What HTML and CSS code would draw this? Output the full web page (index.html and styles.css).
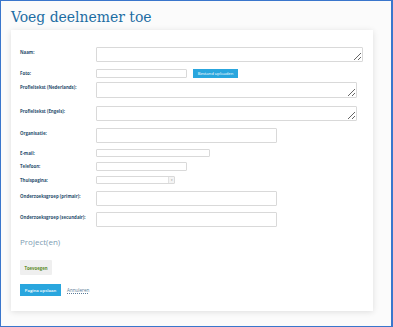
FILE: index.html
```html
<!DOCTYPE html>
<html lang="nl">
<head>
    <meta charset="UTF-8">
    <meta name="viewport" content="width=device-width, initial-scale=1.0">
    <title>Voeg deelnemer toe</title>
    <link rel="stylesheet" href="styles.css">
</head>
<body>

<div class="frame">
    <h1>Voeg deelnemer toe</h1>

    <div class="card">
        <form id="deelnemerForm">
            <div class="row r-naam">
                <label for="naam">Naam:</label>
                <textarea id="naam" class="area wide"></textarea>
            </div>
            <div class="row r-foto">
                <label for="foto">Foto:</label>
                <input type="text" id="foto" class="field small">
                <button type="button" class="btn-upload">Bestand uploaden</button>
            </div>
            <div class="row r-ned">
                <label for="ned">Profieltekst (Nederlands):</label>
                <textarea id="ned" class="area mid tall"></textarea>
            </div>
            <div class="row r-eng">
                <label for="eng">Profieltekst (Engels):</label>
                <textarea id="eng" class="area mid"></textarea>
            </div>
            <div class="row r-org">
                <label for="org">Organisatie:</label>
                <input type="text" id="org" class="field big">
            </div>
            <div class="row r-mail">
                <label for="mail">E-mail:</label>
                <input type="text" id="mail" class="field email">
            </div>
            <div class="row r-tel">
                <label for="tel">Telefoon:</label>
                <input type="text" id="tel" class="field small">
            </div>
            <div class="row r-thuis">
                <label>Thuispagina:</label>
                <div class="select">
                    <span class="select-arrow">&#9662;</span>
                </div>
            </div>
            <div class="row r-prim">
                <label for="prim">Onderzoeksgroep (primair):</label>
                <input type="text" id="prim" class="field big">
            </div>
            <div class="row r-sec">
                <label for="sec">Onderzoeksgroep (secundair):</label>
                <input type="text" id="sec" class="field big">
            </div>

            <h2>Project(en)</h2>
            <button type="button" class="btn-add">Toevoegen</button>

            <div class="actions">
                <button type="submit" class="btn-save">Pagina opslaan</button>
                <a href="#" class="cancel">Annuleren</a>
            </div>
        </form>
    </div>
</div>

</body>
</html>
```

FILE: styles.css
```css
html, body {
    margin: 0;
    padding: 0;
}
body {
    font-family: "Open Sans", Arial, sans-serif;
    background-color: #fff;
}
.frame {
    box-sizing: border-box;
    width: 393px;
    height: 327px;
    border: 1px solid #3a76cc;
    border-right-width: 2px;
    background-color: #fbfbfb;
    padding: 0 18px 0 10px;
    overflow: hidden;
}
h1 {
    font-family: "DejaVu Serif Condensed", "DejaVu Serif", Georgia, serif;
    font-stretch: condensed;
    font-weight: normal;
    font-size: 15.5px;
    line-height: 20px;
    color: #1c6da3;
    margin: 6px 0 3px 0;
}
.card {
    background-color: #fff;
    box-shadow: 0 1px 6px rgba(0, 0, 0, 0.12);
    padding: 17px 10px 15px 9px;
}
.row {
    display: flex;
    align-items: flex-start;
}
.row label {
    width: 76px;
    flex-shrink: 0;
    font-size: 4.4px;
    font-weight: bold;
    color: #2b4f6e;
    line-height: 6px;
    padding-top: 1px;
}
.r-naam { margin-bottom: 7px; }
.r-foto { margin-bottom: 4px; }
.r-ned { margin-bottom: 8px; }
.r-eng { margin-bottom: 7px; }
.r-org { margin-bottom: 6px; }
.r-mail { margin-bottom: 5px; }
.r-tel { margin-bottom: 5px; }
.r-thuis { margin-bottom: 7px; }
.r-prim { margin-bottom: 6px; }
.r-sec { margin-bottom: 10px; }

.r-naam label, .r-ned label, .r-eng label, .r-org label, .r-prim label, .r-sec label {
    padding-top: 2px;
}

.area, .field {
    box-sizing: border-box;
    border: 1px solid #d9d9d9;
    border-radius: 1px;
    background-color: #fff;
    margin: 0;
    padding: 0;
    font-size: 5px;
}
.area {
    height: 15px;
    resize: vertical;
    display: block;
}
.area.tall { height: 16px; }
.area.wide { width: 267px; }
.area.mid { width: 261px; }
.field {
    height: 9px;
}
.field.small { width: 91px; }
.field.email { width: 114px; height: 8px; }
.field.big { width: 181px; height: 15px; }

.btn-upload {
    margin: 0 0 0 6px;
    height: 9px;
    width: 45px;
    padding: 0;
    border: none;
    background-color: #29a6de;
    color: #fff;
    font-family: "Open Sans", Arial, sans-serif;
    font-size: 4.2px;
    line-height: 9px;
    cursor: pointer;
}

.select {
    box-sizing: border-box;
    width: 79px;
    height: 8px;
    border: 1px solid #d9d9d9;
    border-radius: 1px;
    display: flex;
    justify-content: flex-end;
}
.select-arrow {
    width: 5px;
    height: 6px;
    border-left: 1px solid #e2e2e2;
    background-color: #f4f4f4;
    color: #999;
    font-size: 3px;
    line-height: 6px;
    text-align: center;
}

h2 {
    font-family: "Open Sans", Arial, sans-serif;
    font-weight: normal;
    font-size: 8px;
    line-height: 10px;
    color: #7c9bb2;
    margin: 0 0 13px 0;
}
.btn-add {
    display: block;
    height: 15px;
    width: 32px;
    padding: 0;
    border: none;
    border-radius: 1px;
    background-color: #efefef;
    color: #5e8c2a;
    font-family: "Open Sans", Arial, sans-serif;
    font-weight: bold;
    font-size: 4.3px;
    cursor: pointer;
    margin-bottom: 9px;
}
.actions {
    display: flex;
    align-items: center;
    gap: 6px;
}
.btn-save {
    height: 12px;
    width: 41px;
    padding: 0;
    border: none;
    background-color: #29a6de;
    color: #fff;
    font-family: "Open Sans", Arial, sans-serif;
    font-weight: 600;
    font-size: 4.3px;
    cursor: pointer;
}
.cancel {
    font-size: 4.6px;
    color: #5b7b98;
    text-decoration: underline dotted;
}
```
